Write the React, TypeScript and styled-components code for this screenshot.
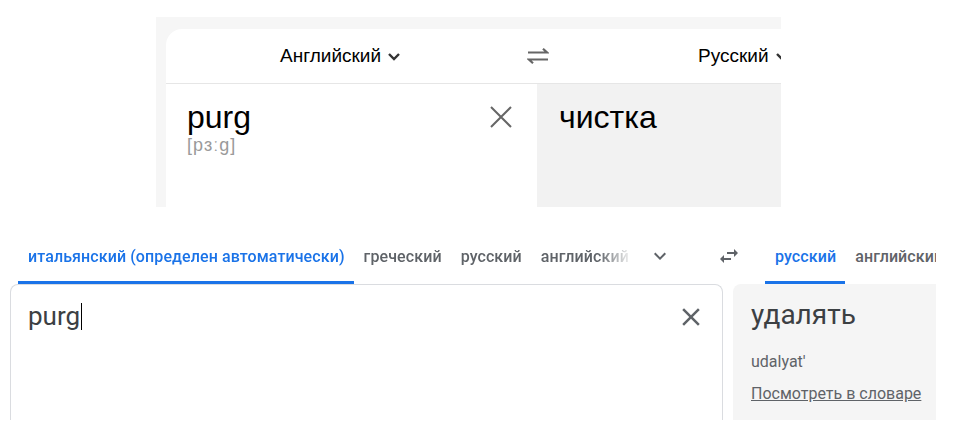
import React from 'react'
import styled, { createGlobalStyle } from 'styled-components'

const GlobalStyle = createGlobalStyle`
  body {
    margin: 0;
    background: #fff;
    font-family: Roboto, 'Liberation Sans', sans-serif;
  }
`

const Page = styled.div`
  width: 960px;
  height: 428px;
  overflow: hidden;
`

/* ---------- upper shot: yandex-like translator ---------- */

const YShot = styled.div`
  box-sizing: border-box;
  margin: 17px 0 0 156px;
  width: 625px;
  height: 190px;
  padding: 12px 0 0 10px;
  background: #f6f6f6;
  overflow: hidden;
`

const YCard = styled.div`
  height: 100%;
  display: flex;
  flex-direction: column;
  background: #fff;
  border-top-left-radius: 16px;
`

const YHeader = styled.div`
  height: 54px;
  flex-shrink: 0;
  display: flex;
  align-items: center;
  border-bottom: 1px solid #e6e6e6;
`

const YLang = styled.div<{ $offset: number }>`
  margin-left: ${(p) => p.$offset}px;
  display: flex;
  align-items: center;
  gap: 6px;
  font-family: 'Liberation Sans', Arial, sans-serif;
  font-size: 19px;
  color: #000;
  white-space: nowrap;
`

const YSwap = styled.div`
  margin-left: 126px;
  display: flex;
  color: #666;
`

const YBody = styled.div`
  flex: 1;
  display: grid;
  grid-template-columns: 371px 1fr;
`

const YSource = styled.div`
  display: flex;
  justify-content: space-between;
  align-items: flex-start;
  padding: 14px 25px 0 21px;
`

const YTarget = styled.div`
  background: #f2f2f2;
  padding: 14px 22px 0;
`

const YWord = styled.div`
  font-family: 'Liberation Sans', Arial, sans-serif;
  font-size: 32px;
  line-height: 38px;
  color: #000;
`

const YTranscription = styled.div`
  font-family: 'Liberation Sans', Arial, sans-serif;
  font-size: 18px;
  line-height: 18px;
  letter-spacing: 1px;
  color: #9a9a9a;
`

const YClose = styled.div`
  margin-top: 8px;
  display: flex;
  color: #666;
`

/* ---------- lower shot: google-like translator ---------- */

const GShot = styled.div`
  margin-top: 29px;
  height: 184px;
  overflow: hidden;
`

const GTabsRow = styled.div`
  height: 48px;
  display: flex;
  padding-left: 18px;
`

const GTabList = styled.div<{ $width: number; $fade?: boolean }>`
  width: ${(p) => p.$width}px;
  flex-shrink: 0;
  display: flex;
  overflow: hidden;
  ${(p) =>
    p.$fade &&
    'mask-image: linear-gradient(to right, #000 580px, transparent 615px); -webkit-mask-image: linear-gradient(to right, #000 580px, transparent 615px);'}
`

const GTab = styled.div<{ $active?: boolean }>`
  display: flex;
  align-items: center;
  padding: 0 9px 5px 10px;
  font-size: 16px;
  font-weight: 500;
  letter-spacing: 0.1px;
  white-space: nowrap;
  color: ${(p) => (p.$active ? '#1a73e8' : '#5f6368')};
  border-bottom: 3px solid ${(p) => (p.$active ? '#1a73e8' : 'transparent')};
`

const GIconButton = styled.div<{ $width: number; $gap?: number }>`
  width: ${(p) => p.$width}px;
  margin-left: ${(p) => p.$gap ?? 0}px;
  padding-bottom: 8px;
  flex-shrink: 0;
  display: flex;
  align-items: center;
  justify-content: center;
  color: #5f6368;
`

const GPanels = styled.div`
  height: 136px;
  display: grid;
  grid-template-columns: 713px 203px;
  gap: 10px;
  padding-left: 10px;
`

const GSource = styled.div`
  display: flex;
  justify-content: space-between;
  align-items: flex-start;
  padding: 14px 16px 0 17px;
  border: 1px solid #dadce0;
  border-bottom: none;
  border-radius: 8px 8px 0 0;
`

const GInput = styled.div`
  display: flex;
  align-items: center;
  font-size: 26px;
  line-height: 34px;
  color: #3c4043;
`

const Caret = styled.span`
  display: inline-block;
  width: 1px;
  height: 27px;
  margin-left: 1px;
  background: #000;
`

const GClose = styled.div`
  margin-top: 3px;
  display: flex;
  color: #5f6368;
`

const GTarget = styled.div`
  background: #f5f5f5;
  border-top-left-radius: 8px;
  padding: 13px 0 0 18px;
`

const GResult = styled.div`
  font-size: 28px;
  line-height: 36px;
  color: #3c4043;
  white-space: nowrap;
`

const GRoman = styled.div`
  margin-top: 19px;
  font-size: 16px;
  line-height: 20px;
  color: #5f6368;
`

const GLink = styled.div`
  margin-top: 12px;
  font-size: 16px;
  line-height: 20px;
  color: #5f6368;
  text-decoration: underline;
  white-space: nowrap;
`

/* ---------- icons ---------- */

const SmallChevron = () => (
  <svg width="14" height="9" viewBox="0 0 14 9" fill="none">
    <path d="M2 2l5 5 5-5" stroke="#333" strokeWidth="2.4" />
  </svg>
)

const YSwapIcon = () => (
  <svg width="22" height="16" viewBox="0 0 22 16" fill="none" stroke="currentColor" strokeWidth="2.2">
    <path d="M1 4.5h19L16 0.8" />
    <path d="M21 11.5H2l4 3.7" />
  </svg>
)

const YCloseIcon = () => (
  <svg width="22" height="22" viewBox="0 0 22 22" fill="none" stroke="currentColor" strokeWidth="2">
    <path d="M1 1l20 20M21 1L1 21" />
  </svg>
)

const ExpandMore = () => (
  <svg width="24" height="24" viewBox="0 0 24 24" fill="currentColor">
    <path d="M16.59 8.59L12 13.17 7.41 8.59 6 10l6 6 6-6z" />
  </svg>
)

const SwapHoriz = () => (
  <svg width="24" height="24" viewBox="0 0 24 24" fill="currentColor">
    <path d="M6.99 11L3 15l3.99 4v-3H14v-2H6.99v-3zM21 9l-3.99-4v3H10v2h7.01v3L21 9z" />
  </svg>
)

const GCloseIcon = () => (
  <svg width="30" height="30" viewBox="0 0 24 24" fill="currentColor">
    <path d="M19 6.41L17.59 5 12 10.59 6.41 5 5 6.41 10.59 12 5 17.59 6.41 19 12 13.41 17.59 19 19 17.59 13.41 12z" />
  </svg>
)

const sourceTabs = ['итальянский (определен автоматически)', 'греческий', 'русский', 'английский']
const targetTabs = ['русский', 'английский']

export default function App() {
  return (
    <Page>
      <GlobalStyle />

      <YShot>
        <YCard>
          <YHeader>
            <YLang $offset={114}>
              Английский <SmallChevron />
            </YLang>
            <YSwap>
              <YSwapIcon />
            </YSwap>
            <YLang $offset={149}>
              Русский <SmallChevron />
            </YLang>
          </YHeader>
          <YBody>
            <YSource>
              <div>
                <YWord>purg</YWord>
                <YTranscription>[pɜːg]</YTranscription>
              </div>
              <YClose>
                <YCloseIcon />
              </YClose>
            </YSource>
            <YTarget>
              <YWord>чистка</YWord>
            </YTarget>
          </YBody>
        </YCard>
      </YShot>

      <GShot>
        <GTabsRow>
          <GTabList $width={622} $fade>
            {sourceTabs.map((t, i) => (
              <GTab key={t} $active={i === 0}>
                {t}
              </GTab>
            ))}
          </GTabList>
          <GIconButton $width={40}>
            <ExpandMore />
          </GIconButton>
          <GIconButton $width={48} $gap={25}>
            <SwapHoriz />
          </GIconButton>
          <GTabList $width={171} style={{ marginLeft: 12 }}>
            {targetTabs.map((t, i) => (
              <GTab key={t} $active={i === 0}>
                {t}
              </GTab>
            ))}
          </GTabList>
        </GTabsRow>
        <GPanels>
          <GSource>
            <GInput>
              purg
              <Caret />
            </GInput>
            <GClose>
              <GCloseIcon />
            </GClose>
          </GSource>
          <GTarget>
            <GResult>удалять</GResult>
            <GRoman>udalyat'</GRoman>
            <GLink>Посмотреть в словаре</GLink>
          </GTarget>
        </GPanels>
      </GShot>
    </Page>
  )
}
